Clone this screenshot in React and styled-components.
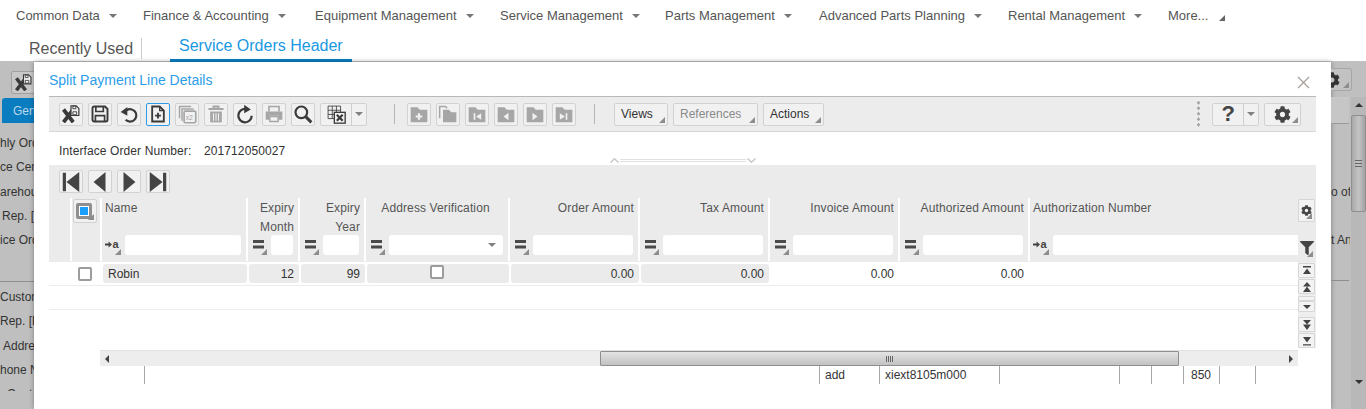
import React from "react";
import styled, { createGlobalStyle } from "styled-components";
import { FaCog, FaFilter } from "react-icons/fa";

const GlobalStyle = createGlobalStyle`
  html, body {
    margin: 0;
    padding: 0;
    height: 409px;
    overflow: hidden;
    background: #fff;
    font-family: "Liberation Sans", Arial, sans-serif;
    font-size: 12px;
    color: #333;
  }
  * { box-sizing: border-box; }
`;

const Page = styled.div`
  width: 1366px;
  height: 409px;
  overflow: hidden;
`;

/* top menu */
const Nav = styled.nav`
  display: flex;
  align-items: center;
  height: 31px;
  padding-left: 16px;
`;
const NavItem = styled.div`
  display: flex;
  align-items: center;
  flex: none;
  width: ${(p) => p.$width}px;
  gap: 9px;
  font-size: 13px;
  color: #555;
  white-space: nowrap;
`;
const NavCaret = styled.span`
  width: 0;
  height: 0;
  border-left: 4px solid transparent;
  border-right: 4px solid transparent;
  border-top: 4px solid #777;
`;
const MoreCaret = styled.span`
  width: 0;
  height: 0;
  margin: 5px 0 0 2px;
  border-left: 6px solid transparent;
  border-bottom: 6px solid #666;
`;

const Tabs = styled.div`
  display: flex;
  align-items: flex-end;
  height: 31px;
  padding-left: 29px;
  box-shadow: inset 0 -1px 0 #c2c2c2;
`;
const RecentTab = styled.div`
  font-size: 16px;
  line-height: 21px;
  color: #555;
  padding-right: 8px;
  margin-bottom: 3px;
  border-right: 1px solid #ccc;
`;
const ActiveTab = styled.div`
  margin-left: 28px;
  padding: 0 9px 3px;
  font-size: 16px;
  line-height: 21px;
  color: #1a98e2;
  border-bottom: 3px solid #0a7fc4;
`;

/* dimmed page behind the dialog */
const Stage = styled.div`
  display: flex;
  height: 347px;
  background: #bfbfbf;
`;
const LeftPeek = styled.div`
  width: 34px;
  overflow: hidden;
  white-space: nowrap;
  color: #333;
  font-size: 12px;
`;
const PeekButton = styled.div`
  display: flex;
  align-items: center;
  justify-content: center;
  width: 24px;
  height: 23px;
  margin: 9px 0 0 11px;
  border: 1px solid #a0a0a0;
  border-radius: 2px;
  background: #c8c8c8;
`;
const PeekTab = styled.div`
  width: 40px;
  height: 25px;
  margin: 4px 0 0 2px;
  padding: 6px 0 0 11px;
  border-radius: 3px 3px 0 0;
  background: #0a7cc0;
  color: #b9d8ea;
`;
const PeekLines = styled.div`
  margin-top: ${(p) => p.$top}px;
  height: ${(p) => p.$height}px;
  overflow: hidden;
`;
const PeekLine = styled.div`
  height: 24.3px;
  line-height: 24px;
  padding-left: ${(p) => p.$indent || 0}px;
`;
const PeekRule = styled.div`
  height: 1px;
  margin-top: ${(p) => p.$top}px;
  background: #8e8e8e;
`;
const RightPeek = styled.div`
  display: flex;
  width: 35px;
  overflow: hidden;
  color: #333;
`;
const RightBody = styled.div`
  flex: none;
  width: 20px;
  white-space: nowrap;
`;
const RightGear = styled.div`
  display: flex;
  align-items: center;
  position: relative;
  width: 21px;
  height: 23px;
  margin-top: 6px;
  margin-bottom: 6px;
  padding-left: 0;
  overflow: hidden;
  border: 1px solid #a6a6a6;
  border-left: 0;
  border-radius: 0 3px 3px 0;
  background: #c2c2c2;
  color: #333;
  font-size: 16px;
`;
const GearClip = styled.span`
  display: flex;
  margin-left: -7px;
`;
const RightField = styled.div`
  height: 27px;
  width: 18px;
  border-bottom: 1px solid #9a9a9a;
  border-top: 1px solid #c9c9c9;
  background: #c6c6c6;
`;
const RightText = styled.div`
  margin-top: ${(p) => p.$top}px;
  width: 19px;
  height: 24px;
  line-height: 24px;
  overflow: hidden;
`;
const RightRule = styled.div`
  width: 18px;
  height: 1px;
  margin-top: 28px;
  background: #8e8e8e;
`;
const PageScroll = styled.div`
  display: flex;
  flex-direction: column;
  align-items: center;
  width: 15px;
  margin-top: 35px;
  background: #b8b8b8;
`;
const PageThumb = styled.div`
  display: flex;
  align-items: center;
  justify-content: center;
  width: 15px;
  height: 97px;
  margin-top: 8px;
  border: 1px solid #8f8f8f;
  border-radius: 2px;
  background: linear-gradient(to right, #a8a8a8, #c4c4c4 50%, #a2a2a2);
`;
const PageGrip = styled.span`
  width: 7px;
  height: 7px;
  background: repeating-linear-gradient(to bottom, #666 0 1px, transparent 1px 3px);
`;
const TinyUp = styled.span`
  margin-top: 6px;
  width: 0;
  height: 0;
  border-left: 4px solid transparent;
  border-right: 4px solid transparent;
  border-bottom: 4px solid #333;
`;
const TinyDown = styled.span`
  margin-top: 168px;
  width: 0;
  height: 0;
  border-left: 4px solid transparent;
  border-right: 4px solid transparent;
  border-top: 4px solid #333;
`;

/* dialog */
const Modal = styled.section`
  width: 1297px;
  height: 347px;
  padding: 0 15px;
  background: #fff;
  overflow: hidden;
  box-shadow: 0 0 5px rgba(0, 0, 0, 0.35);
`;
const TitleRow = styled.header`
  display: flex;
  align-items: center;
  justify-content: space-between;
  height: 34px;
  padding: 2px 6px 0 0;
`;
const Title = styled.h2`
  margin: 0;
  font-size: 14px;
  font-weight: 400;
  color: #2b9de9;
`;
const CloseSlot = styled.span`
  display: flex;
  margin-top: 5px;
`;
const Toolbar = styled.div`
  display: flex;
  align-items: center;
  height: 36px;
  padding: 0 15px 0 10px;
  gap: 5px;
  background: #ececec;
  border-top: 1px solid #b9b9b9;
  border-bottom: 1px solid #d6d6d6;
`;
const ToolButton = styled.button`
  display: flex;
  align-items: center;
  justify-content: center;
  position: relative;
  flex: none;
  width: ${(p) => p.$width || 24}px;
  height: 23px;
  padding: 0;
  border: 1px solid ${(p) => (p.$active ? "#2a9de6" : "#d2d2d2")};
  border-radius: 2px;
  background: #f1f1f1;
  font-family: inherit;
  font-size: 12px;
  color: ${(p) => (p.$off ? "#8a8a8a" : "#333")};
`;
const TextButton = styled(ToolButton)`
  justify-content: flex-start;
  padding-left: 6px;
`;
const SplitPart = styled.span`
  display: flex;
  align-items: center;
  justify-content: center;
  height: 100%;
  width: ${(p) => p.$width}px;
  border-left: ${(p) => (p.$divider ? "1px solid #cfcfcf" : "none")};
`;
const Corner = styled.span`
  position: absolute;
  right: 2px;
  bottom: 2px;
  width: 0;
  height: 0;
  border-left: 6px solid transparent;
  border-bottom: 6px solid #8d8d8d;
`;
const OpCorner = styled(Corner)`
  right: 4px;
  bottom: 0;
`;
const GreyCaret = styled.span`
  width: 0;
  height: 0;
  border-left: 4px solid transparent;
  border-right: 4px solid transparent;
  border-top: 4px solid #808080;
`;
const ToolSep = styled.span`
  flex: none;
  width: 1px;
  height: 20px;
  margin-left: ${(p) => p.$left}px;
  margin-right: ${(p) => p.$right}px;
  background: #b5b5b5;
`;
const Grip = styled.span`
  flex: none;
  width: 3px;
  height: 28px;
  margin-left: auto;
  margin-right: 7px;
  background: radial-gradient(circle at center, #a5a5a5 1.4px, transparent 1.6px) 0 0 / 3px 5.5px;
`;
const HelpMark = styled.span`
  font-size: 22px;
  font-weight: 700;
  color: #444;
`;

const InfoRow = styled.div`
  display: flex;
  align-items: center;
  height: 33px;
  padding: 5px 0 0 10px;
  font-size: 12px;
  color: #333;
`;
const InfoLabel = styled.span`
  width: 145px;
  letter-spacing: 0.1px;
`;
const InfoValue = styled.span`
  width: 84px;
  letter-spacing: 0.1px;
`;
const Splitter = styled.div`
  display: flex;
  align-items: center;
  align-self: flex-end;
  height: 7px;
  margin: 0 0 1px 322px;
  gap: 1px;
`;
const SplitLine = styled.span`
  width: 126px;
  height: 3px;
  border-top: 1px solid #e0e0e0;
  border-bottom: 1px solid #e0e0e0;
`;

const Panel = styled.div`
  display: grid;
  grid-template-columns: 1249px 18px;
`;
const Pager = styled.div`
  grid-column: 1 / 3;
  display: flex;
  height: 33px;
  padding: 5px 0 0 10px;
  gap: 5px;
  background: #ebebeb;
`;
const TableMain = styled.div`
  min-width: 0;
`;
const HeaderRow = styled.div`
  display: grid;
  grid-template-columns: ${(p) => p.$cols};
  height: 64px;
  background: #ebebeb;
`;
const Gutter = styled.div``;
const HeadCell = styled.div`
  display: flex;
  flex-direction: column;
  height: 63px;
  border-left: 2px solid #fff;
`;
const HeadCheckCell = styled(HeadCell)`
  padding: 1px 0 0 1px;
`;
const HeadLabel = styled.div`
  height: 37px;
  padding: 1px ${(p) => (p.$right ? 4 : p.$center ? 6 : 0)}px 0 3px;
  text-align: ${(p) => (p.$right ? "right" : p.$center ? "center" : "left")};
  line-height: 18.5px;
  font-size: 12px;
  letter-spacing: 0.12px;
  color: #555;
`;
const FilterRow = styled.div`
  display: flex;
  align-items: stretch;
  height: 20px;
  padding-right: ${(p) => (p.$flush ? 0 : 5)}px;
`;
const OpButton = styled.span`
  display: flex;
  align-items: center;
  justify-content: center;
  position: relative;
  flex: none;
  width: 23px;
  padding: 0 3px 2px 0;
`;
const OpLetter = styled.span`
  font-size: 11px;
  font-weight: 700;
  color: #444;
`;
const FilterBox = styled.div`
  display: flex;
  align-items: center;
  justify-content: flex-end;
  flex: 1;
  padding-right: 7px;
  background: #fff;
  border-radius: ${(p) => (p.$flush ? "3px 0 0 3px" : "3px")};
`;
const SelectAll = styled.div`
  display: flex;
  align-items: center;
  padding-left: 2px;
  position: relative;
  width: 24px;
  height: 24px;
  border: 1px solid #d2d2d2;
  border-radius: 2px;
  background: #f1f1f1;
`;
const SelectBox = styled.div`
  width: 16px;
  height: 16px;
  border: 3px solid #8f8f8f;
  border-radius: 2px;
  background: #fff;
  padding: 1px;
`;
const SelectFill = styled.div`
  width: 100%;
  height: 100%;
  background: #1a9fff;
`;

const Rows = styled.div`
  height: 88px;
`;
const Row = styled.div`
  display: grid;
  grid-template-columns: ${(p) => p.$cols};
  height: 24px;
  padding-top: 2px;
  border-bottom: 1px solid #ececec;
`;
const CheckCell = styled.div`
  display: flex;
  justify-content: flex-start;
  padding: 3px 0 0 8px;
`;
const Box = styled.span`
  display: block;
  width: 14px;
  height: 14px;
  border: 2px solid #9c9c9c;
  border-radius: 2px;
  background: #fff;
`;
const Cell = styled.div`
  display: flex;
  align-items: center;
  justify-content: ${(p) => (p.$center ? "center" : p.$right ? "flex-end" : "flex-start")};
  height: 19px;
  margin: 0 -1px 0 3px;
  padding: ${(p) => (p.$center ? "0 2px 4px 0" : "0 5px")};
  border-radius: 3px;
  background: ${(p) => (p.$plain ? "transparent" : "#ebebeb")};
  font-size: 12px;
  color: #333;
`;
const HScroll = styled.div`
  display: flex;
  align-items: stretch;
  height: 16px;
  margin-left: 51px;
  background: #ededed;
  border-top: 1px solid #e2e2e2;
`;
const ArrowSlot = styled.span`
  display: flex;
  align-items: center;
  justify-content: center;
  flex: none;
  width: ${(p) => p.$width}px;
`;
const HTrack = styled.div`
  flex: 1;
  display: flex;
`;
const HThumb = styled.div`
  display: flex;
  align-items: center;
  justify-content: center;
  width: 579px;
  margin-left: 486px;
  border: 1px solid #8f8f8f;
  border-radius: 1px;
  background: linear-gradient(to bottom, #e4e4e4, #cfcfcf 60%, #c2c2c2);
`;
const ThumbGrip = styled.span`
  width: 7px;
  height: 6px;
  background: repeating-linear-gradient(to right, #666 0 1px, transparent 1px 2px);
`;
const TriLeft = styled.span`
  width: 0;
  height: 0;
  border-top: 4px solid transparent;
  border-bottom: 4px solid transparent;
  border-right: 4px solid #444;
`;
const TriRight = styled.span`
  width: 0;
  height: 0;
  border-top: 4px solid transparent;
  border-bottom: 4px solid transparent;
  border-left: 4px solid #444;
`;

const SideCol = styled.aside`
  display: flex;
  flex-direction: column;
  height: 152px;
`;
const SideHead = styled.div`
  display: flex;
  flex-direction: column;
  align-items: flex-end;
  height: 64px;
  padding: 1px 1px 0 0;
  background: #ebebeb;
`;
const SideButton = styled.span`
  display: flex;
  align-items: center;
  justify-content: center;
  position: relative;
  width: 17px;
  height: ${(p) => p.$height || 23}px;
  margin-top: ${(p) => p.$top || 0}px;
  color: #444;
  border: ${(p) => (p.$bare ? "none" : "1px solid #d6d6d6")};
  border-radius: 1px;
  background: ${(p) => (p.$bare ? "transparent" : "#f3f3f3")};
  font-size: ${(p) => p.$icon || 11}px;
`;
const SideScroll = styled.div`
  display: flex;
  flex-direction: column;
  align-items: flex-end;
  height: 86px;
  padding: 1px 1px 0 0;
  background: #eeeeee;
`;

const Beneath = styled.div`
  display: grid;
  grid-template-columns: 95px 675px 60px 120px 120px 32px 32px 36px 36px 36px;
  height: 18px;
  font-size: 12px;
  color: #333;
`;
const BeneathCell = styled.div`
  padding-left: ${(p) => p.$pad || 0}px;
  line-height: 18px;
  border-left: ${(p) => (p.$open ? "none" : "1px solid #a8a8a8")};
`;

/* drawings */
const Svg = ({ size = 18, children, color = "#444" }) => (
  <svg width={size} height={size} viewBox="0 0 24 24" style={{ color }} fill="none" stroke="currentColor">
    {children}
  </svg>
);

const iconOff = "#a6a6a6";

const SaveClose = ({ size = 18 }) => (
  <Svg size={size} color="#3a3a3a">
    <path d="M2 6 L15 23 M15 6 L2 23" strokeWidth="5" />
    <path d="M12 1h7l3.5 3.5V14H12z" fill="#f1f1f1" strokeWidth="1.6" />
    <path d="M14.5 1.5h4v3.5h-4z M14.5 9h5v4h-5z" strokeWidth="1.2" />
  </Svg>
);
const SaveIcon = () => (
  <Svg size={20} color="#3a3a3a">
    <path d="M3 5a2 2 0 0 1 2-2h13l3 3v13a2 2 0 0 1-2 2H5a2 2 0 0 1-2-2z" strokeWidth="2.3" />
    <path d="M7 3v6h9V3 M6.5 21v-7h11v7" strokeWidth="2" />
  </Svg>
);
const UndoIcon = () => (
  <Svg size={20} color="#3a3a3a">
    <path d="M9 7.5 A7.5 7.5 0 1 1 8 19" strokeWidth="2.6" />
    <path d="M2 9.5 L10 3.5 V14 z" fill="currentColor" stroke="none" />
  </Svg>
);
const NewDoc = () => (
  <Svg size={20} color="#3a3a3a">
    <path d="M5 3h9l5 5v13H5z" strokeWidth="2.2" />
    <path d="M14 3v5h5" strokeWidth="1.6" />
    <path d="M12 10.5v7 M8.5 14h7" strokeWidth="2.2" />
  </Svg>
);
const DupIcon = () => (
  <Svg size={20} color={iconOff}>
    <path d="M3 17V3h14" strokeWidth="1.8" />
    <path d="M6 20V6h14" strokeWidth="1.8" />
    <rect x="8.5" y="8.5" width="14" height="14" rx="1.5" strokeWidth="2" />
    <text x="10.5" y="19" fontSize="8" fontFamily="Liberation Sans" fill="currentColor" stroke="none">x2</text>
  </Svg>
);
const TrashIcon = () => (
  <Svg size={20} color={iconOff}>
    <path d="M3 6h18 M9 6V3h6v3" strokeWidth="2.2" />
    <path d="M5 9h14v13H5z" fill="currentColor" stroke="none" />
    <path d="M9 11v9 M12 11v9 M15 11v9" stroke="#f1f1f1" strokeWidth="1.3" />
  </Svg>
);
const RedoIcon = () => (
  <Svg size={20} color="#3a3a3a">
    <path d="M13 6 A8 8 0 1 0 20 14" strokeWidth="2.7" />
    <path d="M11 1 L19 6.5 L11 11 z" fill="currentColor" stroke="none" />
  </Svg>
);
const PrintIcon = () => (
  <Svg size={20} color={iconOff}>
    <path d="M6 9V3h12v6" strokeWidth="2" />
    <path d="M2 9h20v10h-4v-5H6v5H2z" fill="currentColor" stroke="none" />
    <path d="M7 15h10v6H7z" strokeWidth="1.8" />
  </Svg>
);
const SearchIcon = () => (
  <Svg size={20} color="#3a3a3a">
    <circle cx="10" cy="10" r="7" strokeWidth="2.6" />
    <path d="M15.5 15.5 L22 22" strokeWidth="3.6" />
  </Svg>
);
const ExcelIcon = () => (
  <Svg size={20} color="#3a3a3a">
    <path d="M2.5 2.5h15v15h-15z M2.5 7.5h15 M2.5 12.5h15 M7.5 2.5v15 M12.5 2.5v15" strokeWidth="1" />
    <rect x="10" y="10" width="13" height="13" fill="#f1f1f1" strokeWidth="1.6" />
    <path d="M13 13 L20 20 M20 13 L13 20" strokeWidth="2.6" />
  </Svg>
);
const Folder = ({ children }) => (
  <Svg size={20} color={iconOff}>
    <path d="M2 4h8l3 3h9v15H2z" fill="currentColor" stroke="none" />
    {children}
  </Svg>
);
const FolderPlus = () => (
  <Folder>
    <path d="M12 11v8 M8 15h8" stroke="#f1f1f1" strokeWidth="2.6" />
  </Folder>
);
const FolderCopy = () => (
  <Svg size={20} color={iconOff}>
    <path d="M2 17V3h7l2 2" strokeWidth="1.8" />
    <path d="M6 7h7l3 3h6v12H6z" fill="currentColor" stroke="none" />
  </Svg>
);
const FolderFirst = () => (
  <Folder>
    <path d="M8 11h2v8H8z M17 11v8l-6-4z" fill="#f1f1f1" stroke="none" />
  </Folder>
);
const FolderPrev = () => (
  <Folder>
    <path d="M15 10.5v9l-6-4.5z" fill="#f1f1f1" stroke="none" />
  </Folder>
);
const FolderNext = () => (
  <Folder>
    <path d="M9 10.5v9l6-4.5z" fill="#f1f1f1" stroke="none" />
  </Folder>
);
const FolderLast = () => (
  <Folder>
    <path d="M7 11v8l6-4z M14 11h2v8h-2z" fill="#f1f1f1" stroke="none" />
  </Folder>
);
const PageFirst = () => (
  <Svg size={22} color="#444">
    <path d="M3 2h3.5v20H3z M21 1v22L7 12z" fill="currentColor" stroke="none" />
  </Svg>
);
const PagePrev = () => (
  <Svg size={22} color="#444">
    <path d="M18 1v22L5 12z" fill="currentColor" stroke="none" />
  </Svg>
);
const PageNext = () => (
  <Svg size={22} color="#444">
    <path d="M6 1v22l13-11z" fill="currentColor" stroke="none" />
  </Svg>
);
const PageLast = () => (
  <Svg size={22} color="#444">
    <path d="M3 1v22l14-11z M17.5 2H21v20h-3.5z" fill="currentColor" stroke="none" />
  </Svg>
);
const CloseIcon = () => (
  <svg width="13" height="13" viewBox="0 0 13 13" fill="none" stroke="#a8a09a" strokeWidth="1.3">
    <path d="M1 1 L12 12 M12 1 L1 12" />
  </svg>
);
const EqualsIcon = () => (
  <svg width="11" height="9" viewBox="0 0 11 9" fill="#4a4a4a">
    <path d="M0 0h11v3H0z M0 5.5h11v3H0z" />
  </svg>
);
const ArrowMini = () => (
  <svg width="7" height="7" viewBox="0 0 7 7" fill="#444">
    <path d="M0 2.6h3.6V0.5L7 3.5 3.6 6.5V4.4H0z" />
  </svg>
);
const SplitUp = () => (
  <svg width="9" height="5" viewBox="0 0 9 5" fill="none" stroke="#c8c8c8" strokeWidth="1.5">
    <path d="M0.5 4.5 L4.5 0.8 L8.5 4.5" />
  </svg>
);
const SplitDown = () => (
  <svg width="9" height="5" viewBox="0 0 9 5" fill="none" stroke="#c8c8c8" strokeWidth="1.5">
    <path d="M0.5 0.5 L4.5 4.2 L8.5 0.5" />
  </svg>
);
const Step = ({ d }) => (
  <svg width="10" height="10" viewBox="0 0 10 10" fill="#444">
    <path d={d} />
  </svg>
);

const toolIcons = [
  { id: "saveClose", icon: <SaveClose /> },
  { id: "save", icon: <SaveIcon /> },
  { id: "undo", icon: <UndoIcon /> },
  { id: "new", icon: <NewDoc />, active: true },
  { id: "dup", icon: <DupIcon /> },
  { id: "trash", icon: <TrashIcon /> },
  { id: "redo", icon: <RedoIcon /> },
  { id: "print", icon: <PrintIcon /> },
  { id: "search", icon: <SearchIcon /> },
];
const folderIcons = [
  { id: "f1", icon: <FolderPlus /> },
  { id: "f2", icon: <FolderCopy /> },
  { id: "f3", icon: <FolderFirst /> },
  { id: "f4", icon: <FolderPrev /> },
  { id: "f5", icon: <FolderNext /> },
  { id: "f6", icon: <FolderLast /> },
];

const menu = [
  { label: "Common Data", width: 127 },
  { label: "Finance & Accounting", width: 172 },
  { label: "Equipment Management", width: 185 },
  { label: "Service Management", width: 165 },
  { label: "Parts Management", width: 154 },
  { label: "Advanced Parts Planning", width: 189 },
  { label: "Rental Management", width: 160 },
];

const gridCols = "21px 30px 146px 52px 66px 144px 130px 130px 130px 130px 270px";

const columns = [
  { label: "Name", op: "a" },
  { label: "Expiry Month", right: true },
  { label: "Expiry Year", right: true },
  { label: "Address Verification", center: true, select: true },
  { label: "Order Amount", right: true },
  { label: "Tax Amount", right: true },
  { label: "Invoice Amount", right: true },
  { label: "Authorized Amount", right: true },
  { label: "Authorization Number", op: "a", flush: true },
];

const App = () => (
  <Page>
    <GlobalStyle />
    <Nav>
      {menu.map((m) => (
        <NavItem key={m.label} $width={m.width}>
          {m.label}
          <NavCaret />
        </NavItem>
      ))}
      <NavItem $width={60}>
        More...
        <MoreCaret />
      </NavItem>
    </Nav>
    <Tabs>
      <RecentTab>Recently Used</RecentTab>
      <ActiveTab>Service Orders Header</ActiveTab>
    </Tabs>
    <Stage>
      <LeftPeek>
        <PeekButton>
          <SaveClose size={17} />
        </PeekButton>
        <PeekTab>Gen</PeekTab>
        <PeekLines $top={8} $height={122}>
          <PeekLine>hly Order</PeekLine>
          <PeekLine>ce Center</PeekLine>
          <PeekLine>arehouse</PeekLine>
          <PeekLine $indent={2}>Rep. [B</PeekLine>
          <PeekLine>ice Order</PeekLine>
        </PeekLines>
        <PeekRule $top={28} />
        <PeekLines $top={3} $height={106}>
          <PeekLine>Custom</PeekLine>
          <PeekLine>Rep. [E</PeekLine>
          <PeekLine $indent={3}>Address</PeekLine>
          <PeekLine>hone N</PeekLine>
          <PeekLine $indent={7}>Cont</PeekLine>
        </PeekLines>
      </LeftPeek>
      <Modal>
        <TitleRow>
          <Title>Split Payment Line Details</Title>
          <CloseSlot>
            <CloseIcon />
          </CloseSlot>
        </TitleRow>
        <Toolbar>
          {toolIcons.map((t) => (
            <ToolButton key={t.id} $active={t.active}>
              {t.icon}
            </ToolButton>
          ))}
          <ToolButton $width={47}>
            <SplitPart $width={31}>
              <ExcelIcon />
            </SplitPart>
            <SplitPart $width={15} $divider>
              <GreyCaret />
            </SplitPart>
          </ToolButton>
          <ToolSep $left={22} $right={7} />
          {folderIcons.map((t) => (
            <ToolButton key={t.id}>{t.icon}</ToolButton>
          ))}
          <ToolSep $left={13} $right={14} />
          <TextButton $width={54}>
            Views
            <Corner />
          </TextButton>
          <TextButton $width={85} $off>
            References
            <Corner />
          </TextButton>
          <TextButton $width={61}>
            Actions
            <Corner />
          </TextButton>
          <Grip />
          <ToolButton $width={47}>
            <SplitPart $width={31}>
              <HelpMark>?</HelpMark>
            </SplitPart>
            <SplitPart $width={15} $divider>
              <GreyCaret />
            </SplitPart>
          </ToolButton>
          <ToolButton $width={37}>
            <SplitPart $width={28}>
              <FaCog size={17} color="#444" />
            </SplitPart>
            <Corner />
          </ToolButton>
        </Toolbar>
        <InfoRow>
          <InfoLabel>Interface Order Number:</InfoLabel>
          <InfoValue>201712050027</InfoValue>
          <Splitter>
            <SplitUp />
            <SplitLine />
            <SplitDown />
          </Splitter>
        </InfoRow>
        <Panel>
          <Pager>
            <ToolButton><PageFirst /></ToolButton>
            <ToolButton><PagePrev /></ToolButton>
            <ToolButton><PageNext /></ToolButton>
            <ToolButton><PageLast /></ToolButton>
          </Pager>
          <TableMain>
            <HeaderRow $cols={gridCols}>
              <Gutter />
              <HeadCheckCell>
                <SelectAll>
                  <SelectBox>
                    <SelectFill />
                  </SelectBox>
                  <Corner />
                </SelectAll>
              </HeadCheckCell>
              {columns.map((c) => (
                <HeadCell key={c.label}>
                  <HeadLabel $right={c.right} $center={c.center}>
                    {c.label}
                  </HeadLabel>
                  <FilterRow $flush={c.flush}>
                    <OpButton>
                      {c.op ? (
                        <>
                          <ArrowMini />
                          <OpLetter>{c.op}</OpLetter>
                        </>
                      ) : (
                        <EqualsIcon />
                      )}
                      <OpCorner />
                    </OpButton>
                    <FilterBox $flush={c.flush}>{c.select && <GreyCaret />}</FilterBox>
                  </FilterRow>
                </HeadCell>
              ))}
            </HeaderRow>
            <Rows>
              <Row $cols={gridCols}>
                <Gutter />
                <CheckCell>
                  <Box />
                </CheckCell>
                <Cell>Robin</Cell>
                <Cell $right>12</Cell>
                <Cell $right>99</Cell>
                <Cell $center>
                  <Box />
                </Cell>
                <Cell $right>0.00</Cell>
                <Cell $right>0.00</Cell>
                <Cell $right $plain>0.00</Cell>
                <Cell $right $plain>0.00</Cell>
              </Row>
              <Row $cols={gridCols} />
            </Rows>
            <HScroll>
              <ArrowSlot $width={14}>
                <TriLeft />
              </ArrowSlot>
              <HTrack>
                <HThumb>
                  <ThumbGrip />
                </HThumb>
              </HTrack>
              <ArrowSlot $width={14}>
                <TriRight />
              </ArrowSlot>
            </HScroll>
          </TableMain>
          <SideCol>
            <SideHead>
              <SideButton $icon={11}>
                <FaCog />
                <Corner />
              </SideButton>
              <SideButton $bare $top={14} $icon={14}>
                <FaFilter />
                <Corner />
              </SideButton>
            </SideHead>
            <SideScroll>
              <SideButton $height={15}>
                <Step d="M1 0h8v1.4H1z M5 2.5 9 8H1z" />
              </SideButton>
              <SideButton $height={15} $top={1}>
                <Step d="M5 0 9 4.5H1z M5 4.5 9 10H1z" />
              </SideButton>
              <SideButton $height={5} $top={2} />
              <SideButton $height={11}>
                <Step d="M1 3h8L5 7z" />
              </SideButton>
              <SideButton $height={15} $top={5}>
                <Step d="M1 0h8L5 4.5z M1 4.5h8L5 10z" />
              </SideButton>
              <SideButton $height={15} $top={1}>
                <Step d="M1 1h8L5 6.5z M1 8.2h8v1.4H1z" />
              </SideButton>
            </SideScroll>
          </SideCol>
        </Panel>
        <Beneath>
          <BeneathCell $open />
          <BeneathCell />
          <BeneathCell $pad={5}>add</BeneathCell>
          <BeneathCell $pad={5}>xiext8105m000</BeneathCell>
          <BeneathCell />
          <BeneathCell />
          <BeneathCell />
          <BeneathCell $pad={7}>850</BeneathCell>
          <BeneathCell />
          <BeneathCell />
        </Beneath>
      </Modal>
      <RightPeek>
        <RightBody>
          <RightGear>
            <GearClip>
              <FaCog />
            </GearClip>
            <Corner />
          </RightGear>
          <RightField />
          <RightText $top={56}>o of</RightText>
          <RightText $top={24}>t An</RightText>
          <RightRule />
        </RightBody>
        <PageScroll>
          <TinyUp />
          <PageThumb>
            <PageGrip />
          </PageThumb>
          <TinyDown />
        </PageScroll>
      </RightPeek>
    </Stage>
  </Page>
);

export default App;
